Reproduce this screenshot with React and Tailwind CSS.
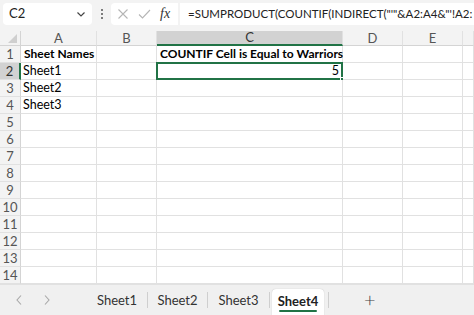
import React from "react";

const font = { fontFamily: 'Lato, "Noto Sans", sans-serif' };

const cols = ["A", "B", "C", "D", "E", ""];
const data = {
  1: { A: "Sheet Names", C: "COUNTIF Cell is Equal to Warriors" },
  2: { A: "Sheet1", C: "5" },
  3: { A: "Sheet2" },
  4: { A: "Sheet3" },
};

function Cell({ r, c }) {
  const v = data[r]?.[c];
  const bold = r === 1;
  const active = r === 2 && c === "C";
  return (
    <div
      className={`relative h-[17px] border-r border-b border-[#e1e1e1] bg-white leading-[16px] text-black whitespace-nowrap ${
        bold ? "font-bold text-[12px] pl-[3px]" : "text-[12.5px]"
      } ${active ? "text-right pr-[3px]" : bold ? "" : "pl-[2px]"}`}
    >
      {v}
      {active && (
        <>
          <div className="absolute -left-[1px] -top-[1px] right-[-1px] bottom-[-1px] border-2 border-[#217346]" />
          <div className="absolute right-[-3px] bottom-[-3px] w-[5px] h-[5px] bg-[#217346] border border-white" />
        </>
      )}
    </div>
  );
}

function Sep({ className = "" }) {
  return <div className={`w-[1px] h-[16px] bg-[#cfcfcf] ${className}`} />;
}

export default function App() {
  const rows = Array.from({ length: 14 }, (_, i) => i + 1);
  return (
    <div className="w-[474px] h-[315px] overflow-hidden bg-[#f3f3f3] flex flex-col" style={font}>
      {/* formula bar */}
      <div className="h-[31px] flex items-start pt-[3px] pl-[3px] shrink-0">
        <div className="w-[89px] h-[22px] bg-white rounded-[4px] flex items-center pl-[6px] pr-[4px] text-[13px] text-[#222]">
          <span className="flex-1">C2</span>
          <svg width="10" height="10" viewBox="0 0 10 10" className="mr-[2px]">
            <path d="M1.5 3.5 L5 7 L8.5 3.5" fill="none" stroke="#444" strokeWidth="1.2" />
          </svg>
        </div>
        <div className="w-[19px] h-[22px] flex flex-col items-center justify-center gap-[2px]">
          <div className="w-[2px] h-[2px] bg-[#555] rounded-full" />
          <div className="w-[2px] h-[2px] bg-[#555] rounded-full" />
          <div className="w-[2px] h-[2px] bg-[#555] rounded-full" />
        </div>
        <div className="w-[67px] h-[22px] bg-white rounded-l-[4px] flex items-center pl-[6px] gap-[9px]">
          <svg width="12" height="12" viewBox="0 0 12 12">
            <path d="M1.5 1.5 L10.5 10.5 M10.5 1.5 L1.5 10.5" stroke="#b5b5b5" strokeWidth="1.1" fill="none" />
          </svg>
          <svg width="13" height="12" viewBox="0 0 13 12">
            <path d="M1 6.5 L4.5 10 L12 2" stroke="#b5b5b5" strokeWidth="1.1" fill="none" />
          </svg>
          <span className="text-[14px] italic text-[#333] leading-none" style={{ fontFamily: '"Liberation Serif", serif' }}>
            fx
          </span>
        </div>
        <div className="ml-[2px] flex-1 min-w-0 h-[22px] bg-white flex items-center pl-[8px] text-[11.5px] text-[#222] whitespace-nowrap overflow-hidden">
          <span className="whitespace-nowrap">=SUMPRODUCT(COUNTIF(INDIRECT("'"&amp;A2:A4&amp;"'!A2:</span>
        </div>
      </div>

      {/* sheet grid */}
      <div className="grid grid-cols-[21px_76px_60px_186px_60px_60px_1fr] bg-white shrink-0">
        <div className="h-[15px] bg-[#f3f3f3] border-r border-b border-[#d4d4d4] relative overflow-hidden">
          <svg width="21" height="15" className="absolute left-0 top-0">
            <polygon points="17,3 17,12 8,12" fill="#cfcfcf" />
          </svg>
        </div>
        {cols.map((c) => (
          <div
            key={c || "F"}
            className={`h-[15px] flex items-center justify-center text-[13px] leading-none border-r border-[#e1e1e1] ${
              c === "C"
                ? "bg-[#d2d2d2] border-b-2 border-b-[#217346] text-[#333]"
                : "bg-[#f3f3f3] border-b border-b-[#d4d4d4] text-[#555]"
            }`}
          >
            {c}
          </div>
        ))}
        {rows.map((r) => (
          <React.Fragment key={r}>
            <div
              className={`h-[17px] flex items-center justify-center text-[13px] leading-none border-b border-[#e1e1e1] ${
                r === 2
                  ? "bg-[#d2d2d2] border-r-2 border-r-[#217346] text-[#333]"
                  : "bg-[#f3f3f3] border-r border-r-[#d4d4d4] text-[#555]"
              }`}
            >
              {r}
            </div>
            {cols.map((c) => (
              <Cell key={c || "F"} r={r} c={c} />
            ))}
          </React.Fragment>
        ))}
      </div>

      {/* tab bar */}
      <div className="flex-1 flex items-stretch bg-[#f0f0f0] border-t border-[#e1e1e1] text-[13px] text-[#333]">
        <div className="flex items-center w-[87px] pl-[15px] gap-[20px]">
          <svg width="8" height="12" viewBox="0 0 8 12">
            <path d="M6 1.5 L2 6 L6 10.5" stroke="#a8a8a8" strokeWidth="1.1" fill="none" />
          </svg>
          <svg width="8" height="12" viewBox="0 0 8 12">
            <path d="M2 1.5 L6 6 L2 10.5" stroke="#a8a8a8" strokeWidth="1.1" fill="none" />
          </svg>
        </div>
        <div className="w-[60px] flex items-center justify-center pt-[2px]">Sheet1</div>
        <div className="flex items-center"><Sep /></div>
        <div className="w-[59px] flex items-center justify-center pt-[2px]">Sheet2</div>
        <div className="flex items-center"><Sep /></div>
        <div className="w-[61px] flex items-center justify-center pt-[2px]">Sheet3</div>
        <div className="flex items-center"><Sep /></div>
        <div className="ml-[2px] w-[52px] mt-[4px] bg-white rounded-t-[4px] flex flex-col items-center justify-center font-bold text-[#222] shadow-[0_0_1px_rgba(0,0,0,0.25)]">
          <span className="leading-[16px]">Sheet4</span>
          <div className="w-[38px] h-[2px] bg-[#217346] mt-[1px] rounded" />
        </div>
        <div className="flex items-center ml-[4px]"><Sep /></div>
        <div className="ml-[35px] flex items-center text-[20px] font-light text-[#444] leading-none pb-[2px]">+</div>
      </div>
    </div>
  );
}
